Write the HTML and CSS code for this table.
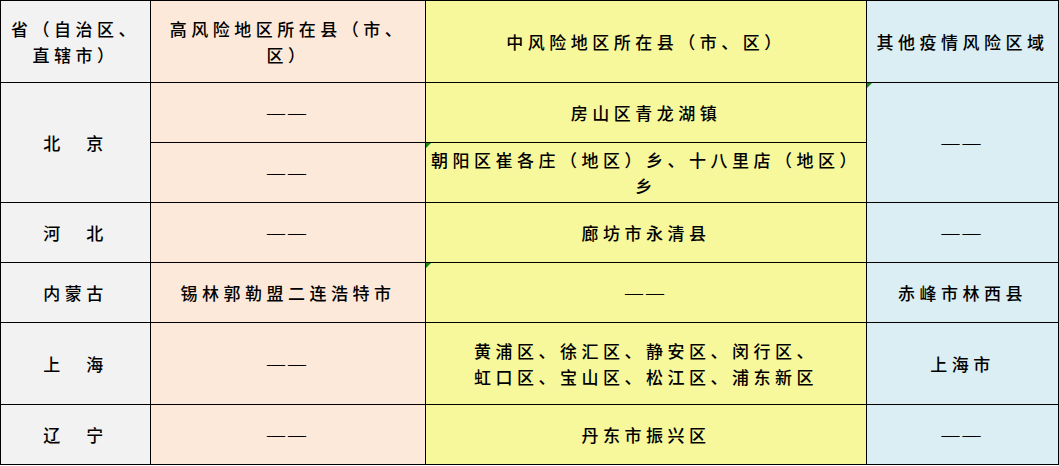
FILE: index.html
```html
<!DOCTYPE html>
<html lang="zh-CN">
<head>
<meta charset="utf-8">
<title>风险地区</title>
<link rel="stylesheet" href="styles.css">
</head>
<body>
<table class="risk">
  <colgroup>
    <col class="c1"><col class="c2"><col class="c3"><col class="c4">
  </colgroup>
  <tr class="tall">
    <th class="prov">省（自治区、<br>直辖市）</th>
    <th class="high">高风险地区所在县（市、<br>区）</th>
    <th class="mid">中风险地区所在县（市、区）</th>
    <th class="other">其他疫情风险区域</th>
  </tr>
  <tr>
    <td class="prov" rowspan="2">北　京</td>
    <td class="high"><span class="dash">——</span></td>
    <td class="mid">房山区青龙湖镇</td>
    <td class="other flag" rowspan="2"><span class="dash">——</span></td>
  </tr>
  <tr>
    <td class="high"><span class="dash">——</span></td>
    <td class="mid flag">朝阳区崔各庄（地区）乡、十八里店（地区）<br>乡</td>
  </tr>
  <tr>
    <td class="prov">河　北</td>
    <td class="high"><span class="dash">——</span></td>
    <td class="mid">廊坊市永清县</td>
    <td class="other"><span class="dash">——</span></td>
  </tr>
  <tr>
    <td class="prov">内蒙古</td>
    <td class="high">锡林郭勒盟二连浩特市</td>
    <td class="mid flag"><span class="dash">——</span></td>
    <td class="other">赤峰市林西县</td>
  </tr>
  <tr class="tall">
    <td class="prov">上　海</td>
    <td class="high"><span class="dash">——</span></td>
    <td class="mid">黄浦区、徐汇区、静安区、闵行区、<br>虹口区、宝山区、松江区、浦东新区</td>
    <td class="other">上海市</td>
  </tr>
  <tr>
    <td class="prov">辽　宁</td>
    <td class="high"><span class="dash">——</span></td>
    <td class="mid">丹东市振兴区</td>
    <td class="other"><span class="dash">——</span></td>
  </tr>
</table>
</body>
</html>
```

FILE: styles.css
```css
html, body {
  margin: 0;
  padding: 0;
  background: #ffffff;
}

.risk {
  border-collapse: collapse;
  table-layout: fixed;
  width: 1058px;
  font-family: "Noto Sans CJK SC", "Noto Sans", sans-serif;
  font-size: 17px;
  letter-spacing: 4.5px;
  color: #000;
}

.c1 { width: 150px; }
.c2 { width: 275px; }
.c3 { width: 441px; }
.c4 { width: 192px; }

.risk th,
.risk td {
  border: 1px solid #000;
  height: 59px;
  padding: 0;
  text-align: center;
  vertical-align: middle;
  font-weight: 500;
  line-height: 26px;
}

.risk tr.tall th,
.risk tr.tall td {
  height: 81px;
}

.prov { background: #f2f2f2; }
.high { background: #fde9d9; }
.mid { background: #f7f89b; }
.other { background: #daeef3; }

.dash {
  font-family: "Liberation Serif", serif;
  font-size: 18px;
  letter-spacing: 3px;
}

.flag {
  position: relative;
}

.flag::before {
  content: "";
  position: absolute;
  left: 0;
  top: 0;
  width: 0;
  height: 0;
  border-top: 5px solid #138a13;
  border-right: 5px solid transparent;
}
```
